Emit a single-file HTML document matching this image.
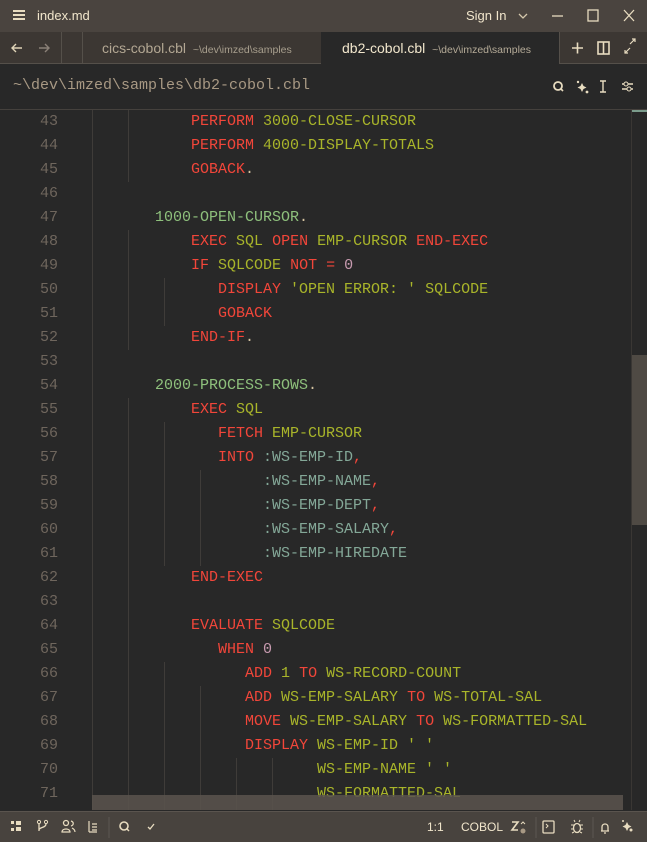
<!DOCTYPE html>
<html><head><meta charset="utf-8"><style>
*{margin:0;padding:0;box-sizing:border-box}
body{width:647px;height:842px;background:#282828;position:relative;overflow:hidden;font-family:"Liberation Sans",sans-serif;color:#ebdbb2}
.abs{position:absolute}
#title{left:0;top:0;width:647px;height:32px;background:#4a443f}
#tabs{left:0;top:32px;width:647px;height:32px;background:#3c3733;border-bottom:1px solid #55504a}
.code{font-family:"Liberation Mono",monospace;font-size:15px;white-space:pre}
.ln{position:absolute;right:589px;width:40px;text-align:right;color:#6f665d;font-family:"Liberation Mono",monospace;font-size:15px;line-height:24px;height:24px}
.line{position:absolute;line-height:24px;height:24px}
.r{color:#f2463a}.y{color:#a9b52a}.g{color:#8ec07c}.w{color:#d5c4a1}.t{color:#84a898}.p{color:#c89bb0}
.gd{position:absolute;width:1px;background:#3f3c39}
#status{left:0;top:811px;width:647px;height:31px;background:#48433e;border-top:1px solid #5a544e}
</style></head><body>
<div id="title" class="abs">
 <div class="abs" style="left:13px;top:10px;width:12px;height:10px;border-top:2px solid #e8dcc0;border-bottom:2px solid #e8dcc0"><div style="margin-top:2px;height:2px;background:#e8dcc0"></div></div>
 <div class="abs" style="left:37px;top:8px;font-size:13px;color:#f1e6cc">index.md</div>
 <div class="abs" style="left:466px;top:8px;font-size:13px;color:#f1e6cc">Sign In</div>
 <svg class="abs" style="left:0;top:0" width="647" height="32"><path d="M519 14l4 4 4-4" stroke="#d5c8ac" fill="none" stroke-width="1.3"/><path d="M552 16h11" stroke="#e8dcc0" stroke-width="1.3"/><rect x="588" y="10" width="10" height="11" fill="none" stroke="#e8dcc0" stroke-width="1.3"/><path d="M624 10l10 11M634 10l-10 11" stroke="#e8dcc0" stroke-width="1.3"/></svg>
</div>
<div id="tabs" class="abs">
 <svg class="abs" style="left:0;top:0" width="70" height="32"><path d="M12 16h10M16 12l-4 4 4 4" stroke="#e0d4b8" fill="none" stroke-width="1.4"/><path d="M39 16h10M45 12l4 4-4 4" stroke="#8a8077" fill="none" stroke-width="1.4"/></svg>
 <div class="abs" style="left:61px;top:0;width:1px;height:32px;background:#55504a"></div>
 <div class="abs" style="left:82px;top:0;width:1px;height:32px;background:#55504a"></div>
 <div class="abs" style="left:102px;top:8px;font-size:14px;color:#b3a793">cics-cobol.cbl <span style="font-size:10.5px;color:#a89f8e">&nbsp;~\dev\imzed\samples</span></div>
 <div class="abs" style="left:321px;top:0;width:238px;height:33px;background:#282828"></div>
 <div class="abs" style="left:342px;top:8px;font-size:14px;color:#f1e6cc">db2-cobol.cbl <span style="font-size:10.5px;color:#b5ab98">&nbsp;~\dev\imzed\samples</span></div>
 <div class="abs" style="left:559px;top:0;width:1px;height:32px;background:#55504a"></div>
 <svg class="abs" style="left:560px;top:0" width="87" height="32"><path d="M12 16h11M17.5 10.5v11" stroke="#e8dcc0" stroke-width="1.6"/><rect x="38" y="10" width="11" height="12" fill="none" stroke="#e8dcc0" stroke-width="1.6"/><path d="M43.5 10v12" stroke="#e8dcc0" stroke-width="1.6"/><path d="M65 21l5-5M70 12l5-5M72 7h3v3M65 18v3h3" stroke="#e8dcc0" fill="none" stroke-width="1.2"/></svg>
</div>
<div class="abs code" style="left:13px;top:77px;font-size:15px;color:#a89984">~\dev\imzed\samples\db2-cobol.cbl</div>
<svg class="abs" style="left:548px;top:78px" width="95" height="18"><circle cx="10" cy="8" r="4" fill="none" stroke="#e8dcc0" stroke-width="1.8"/><path d="M13 11l2 2" stroke="#e8dcc0" stroke-width="1.6"/><path d="M34 5l1.5 3 3 1.5-3 1.5-1.5 3-1.5-3-3-1.5 3-1.5z" fill="#e8dcc0"/><circle cx="30" cy="4" r="1.2" fill="#e8dcc0"/><circle cx="39" cy="14" r="1.4" fill="#e8dcc0"/><path d="M52 3h6M55 3v11M52 14h6" stroke="#e8dcc0" stroke-width="1.4" fill="none"/><path d="M74 6h11M74 11h11" stroke="#e8dcc0" stroke-width="1.4"/><circle cx="78" cy="6" r="2" fill="#282828" stroke="#e8dcc0"/><circle cx="81" cy="11" r="2" fill="#282828" stroke="#e8dcc0"/></svg>
<div class="abs" style="left:0;top:109px;width:647px;height:1px;background:#45413d"></div>
<div class="abs" style="left:631px;top:110px;width:1px;height:700px;background:#3a3734"></div>
<div class="abs" style="left:632px;top:110px;width:15px;height:2px;background:#7b9c8c"></div>
<div class="abs" style="left:632px;top:355px;width:15px;height:170px;background:#4f4a44"></div>

<div id="guides">
<div class="gd" style="left:92px;top:110px;height:700px"></div>
<div class="gd" style="left:128px;top:110px;height:72px"></div>
<div class="gd" style="left:128px;top:230px;height:120px"></div>
<div class="gd" style="left:128px;top:398px;height:412px"></div>
<div class="gd" style="left:164px;top:278px;height:48px"></div>
<div class="gd" style="left:164px;top:422px;height:144px"></div>
<div class="gd" style="left:164px;top:662px;height:148px"></div>
<div class="gd" style="left:200px;top:470px;height:96px"></div>
<div class="gd" style="left:200px;top:686px;height:124px"></div>
<div class="gd" style="left:236px;top:758px;height:52px"></div>
<div class="gd" style="left:272px;top:758px;height:52px"></div>
</div>

<div class="code">
<div class="ln" style="top:110px">43</div><div class="line" style="left:191px;top:110px"><span class="r">PERFORM</span> <span class="y">3000-CLOSE-CURSOR</span></div>
<div class="ln" style="top:134px">44</div><div class="line" style="left:191px;top:134px"><span class="r">PERFORM</span> <span class="y">4000-DISPLAY-TOTALS</span></div>
<div class="ln" style="top:158px">45</div><div class="line" style="left:191px;top:158px"><span class="r">GOBACK</span><span class="w">.</span></div>
<div class="ln" style="top:182px">46</div>
<div class="ln" style="top:206px">47</div><div class="line" style="left:155px;top:206px"><span class="g">1000-OPEN-CURSOR</span><span class="w">.</span></div>
<div class="ln" style="top:230px">48</div><div class="line" style="left:191px;top:230px"><span class="r">EXEC</span> <span class="y">SQL</span> <span class="r">OPEN</span> <span class="y">EMP-CURSOR</span> <span class="r">END-EXEC</span></div>
<div class="ln" style="top:254px">49</div><div class="line" style="left:191px;top:254px"><span class="r">IF</span> <span class="y">SQLCODE</span> <span class="r">NOT =</span> <span class="p">0</span></div>
<div class="ln" style="top:278px">50</div><div class="line" style="left:218px;top:278px"><span class="r">DISPLAY</span> <span class="y">'OPEN ERROR: '</span> <span class="y">SQLCODE</span></div>
<div class="ln" style="top:302px">51</div><div class="line" style="left:218px;top:302px"><span class="r">GOBACK</span></div>
<div class="ln" style="top:326px">52</div><div class="line" style="left:191px;top:326px"><span class="r">END-IF</span><span class="w">.</span></div>
<div class="ln" style="top:350px">53</div>
<div class="ln" style="top:374px">54</div><div class="line" style="left:155px;top:374px"><span class="g">2000-PROCESS-ROWS</span><span class="w">.</span></div>
<div class="ln" style="top:398px">55</div><div class="line" style="left:191px;top:398px"><span class="r">EXEC</span> <span class="y">SQL</span></div>
<div class="ln" style="top:422px">56</div><div class="line" style="left:218px;top:422px"><span class="r">FETCH</span> <span class="y">EMP-CURSOR</span></div>
<div class="ln" style="top:446px">57</div><div class="line" style="left:218px;top:446px"><span class="r">INTO</span> <span class="t">:WS-EMP-ID</span><span class="r">,</span></div>
<div class="ln" style="top:470px">58</div><div class="line" style="left:263px;top:470px"><span class="t">:WS-EMP-NAME</span><span class="r">,</span></div>
<div class="ln" style="top:494px">59</div><div class="line" style="left:263px;top:494px"><span class="t">:WS-EMP-DEPT</span><span class="r">,</span></div>
<div class="ln" style="top:518px">60</div><div class="line" style="left:263px;top:518px"><span class="t">:WS-EMP-SALARY</span><span class="r">,</span></div>
<div class="ln" style="top:542px">61</div><div class="line" style="left:263px;top:542px"><span class="t">:WS-EMP-HIREDATE</span></div>
<div class="ln" style="top:566px">62</div><div class="line" style="left:191px;top:566px"><span class="r">END-EXEC</span></div>
<div class="ln" style="top:590px">63</div>
<div class="ln" style="top:614px">64</div><div class="line" style="left:191px;top:614px"><span class="r">EVALUATE</span> <span class="y">SQLCODE</span></div>
<div class="ln" style="top:638px">65</div><div class="line" style="left:218px;top:638px"><span class="r">WHEN</span> <span class="p">0</span></div>
<div class="ln" style="top:662px">66</div><div class="line" style="left:245px;top:662px"><span class="r">ADD</span> <span class="y">1</span> <span class="r">TO</span> <span class="y">WS-RECORD-COUNT</span></div>
<div class="ln" style="top:686px">67</div><div class="line" style="left:245px;top:686px"><span class="r">ADD</span> <span class="y">WS-EMP-SALARY</span> <span class="r">TO</span> <span class="y">WS-TOTAL-SAL</span></div>
<div class="ln" style="top:710px">68</div><div class="line" style="left:245px;top:710px"><span class="r">MOVE</span> <span class="y">WS-EMP-SALARY</span> <span class="r">TO</span> <span class="y">WS-FORMATTED-SAL</span></div>
<div class="ln" style="top:734px">69</div><div class="line" style="left:245px;top:734px"><span class="r">DISPLAY</span> <span class="y">WS-EMP-ID ' '</span></div>
<div class="ln" style="top:758px">70</div><div class="line" style="left:317px;top:758px"><span class="y">WS-EMP-NAME ' '</span></div>
<div class="ln" style="top:782px">71</div><div class="line" style="left:317px;top:782px"><span class="y">WS-FORMATTED-SAL</span></div>
</div>
<div class="abs" style="left:92px;top:795px;width:531px;height:15px;background:rgba(90,84,77,0.85)"></div>

<div id="status" class="abs">
 <svg class="abs" style="left:0;top:0" width="170" height="30"><rect x="11" y="9" width="3" height="3" fill="#e8dcc0"/><rect x="11" y="16" width="3" height="3" fill="#e8dcc0"/><rect x="16" y="9" width="5" height="4" fill="#e8dcc0"/><rect x="16" y="15" width="5" height="4" fill="#e8dcc0"/>
 <circle cx="39" cy="10" r="1.6" fill="none" stroke="#e8dcc0"/><circle cx="46" cy="10" r="1.6" fill="none" stroke="#e8dcc0"/><path d="M39 12v7M46 12c0 4-7 3-7 6" stroke="#e8dcc0" fill="none" stroke-width="1.3"/>
 <circle cx="66" cy="11" r="2.5" fill="none" stroke="#e8dcc0" stroke-width="1.3"/><path d="M62 20c0-4 8-4 8 0zM71 9c3 1 3 4 0 5M72 16c2 1 3 2 3 4" stroke="#e8dcc0" fill="none" stroke-width="1.2"/>
 <path d="M89 9v11M89 20h8M92 12h5M92 15h5M92 18h5" stroke="#e8dcc0" stroke-width="1.2" fill="none"/>
 <path d="M109 5v21" stroke="#5d5751"/>
 <circle cx="124" cy="14" r="4" fill="none" stroke="#e8dcc0" stroke-width="1.6"/><path d="M127 17l2 2" stroke="#e8dcc0" stroke-width="1.5"/>
 <path d="M148 15l2 2 4-5" stroke="#e8dcc0" fill="none" stroke-width="1.3"/></svg>
 <div class="abs" style="left:427px;top:8px;font-size:12px;color:#f1e6cc">1:1</div>
 <div class="abs" style="left:461px;top:8px;font-size:12px;color:#f1e6cc">COBOL</div>
 <svg class="abs" style="left:505px;top:0" width="142" height="30"><path d="M7 10h6l-6 8h6" stroke="#e8dcc0" fill="none" stroke-width="1.6"/><path d="M16 12l2-2 2 2" stroke="#e8dcc0" fill="none"/><circle cx="18" cy="19" r="2.5" fill="#a89984"/>
 <path d="M31 5v21" stroke="#5d5751"/>
 <rect x="38" y="9" width="11" height="12" rx="1" fill="none" stroke="#e8dcc0" stroke-width="1.3"/><path d="M41 12l2 2-2 2" stroke="#e8dcc0" fill="none"/>
 <ellipse cx="72" cy="16" rx="3.5" ry="4.5" fill="none" stroke="#e8dcc0" stroke-width="1.3"/><path d="M66 13h3M75 13h3M66 17h3M75 17h3M67 21l2-1M77 21l-2-1M70 10l-1-2M74 10l1-2" stroke="#e8dcc0"/>
 <path d="M88 5v21" stroke="#5d5751"/>
 <path d="M96 19h8M97 19v-4c0-4 6-4 6 0v4M99 21h2" stroke="#e8dcc0" fill="none" stroke-width="1.3"/>
 <path d="M122 10l1.5 3 3 1.5-3 1.5-1.5 3-1.5-3-3-1.5 3-1.5z" fill="#e8dcc0"/><circle cx="126" cy="18" r="1.5" fill="#e8dcc0"/><circle cx="118" cy="9" r="1" fill="#e8dcc0"/></svg>
</div>
</body></html>
